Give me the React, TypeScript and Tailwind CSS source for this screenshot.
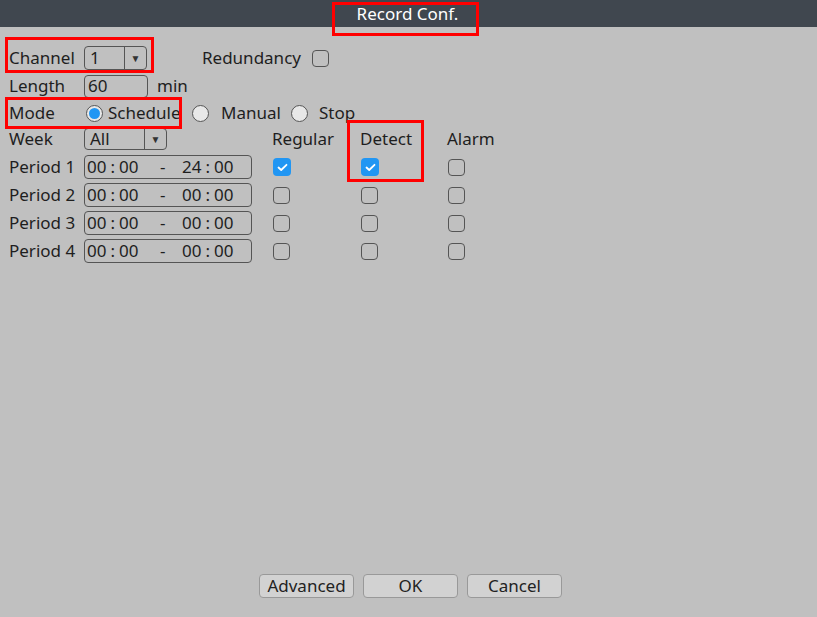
import React from 'react';

const font = { fontFamily: '"Noto Sans", "Open Sans", sans-serif' };

const Check = ({ on }: { on?: boolean }) =>
  on ? (
    <span className="flex h-[18px] w-[18px] items-center justify-center rounded-[4px] bg-[#2196f3]">
      <svg width="11" height="9" viewBox="0 0 11 9" fill="none">
        <path d="M1.5 4.5 L4.2 7 L9.5 1.8" stroke="white" strokeWidth="1.8" strokeLinecap="round" strokeLinejoin="round" />
      </svg>
    </span>
  ) : (
    <span className="block h-[17px] w-[17px] rounded-[4px] border-[1.5px] border-[#555]" />
  );

const Radio = ({ on }: { on?: boolean }) => (
  <span className="flex h-[17px] w-[17px] items-center justify-center rounded-full border-[1.5px] border-[#555] bg-[#e8e8e8]">
    {on && <span className="block h-[11px] w-[11px] rounded-full bg-[#2196f3]" />}
  </span>
);

const Select = ({ value, w, h }: { value: string; w: string; h: string }) => (
  <div className={`flex ${w} ${h} items-stretch rounded-[4px] border border-[#555]`}>
    <span className="flex flex-1 items-center pl-[5px]">{value}</span>
    <span className="flex w-[22px] items-center justify-center border-l border-[#555] text-[10px] text-[#333]">▼</span>
  </div>
);

const TimeBox = ({ end }: { end: string }) => (
  <div className="flex h-[24px] w-[168px] items-center rounded-[4px] border border-[#555] pl-[2px]">
    <span className="w-[73px]">00<span className="mx-[4px]">:</span>00</span>
    <span className="w-[22px]">-</span>
    <span>{end.slice(0, 2)}<span className="mx-[4px]">:</span>{end.slice(3)}</span>
  </div>
);

const periods = [
  { name: 'Period 1', end: '24:00', regular: true, detect: true },
  { name: 'Period 2', end: '00:00' },
  { name: 'Period 3', end: '00:00' },
  { name: 'Period 4', end: '00:00' },
];

export default function App() {
  return (
    <div style={font} className="relative flex h-[617px] w-[817px] flex-col bg-[#c0c0c0] text-[17px] text-[#1e1e1e]">
      <div className="flex h-[27px] items-center justify-center bg-[#40474f] text-white">
        <span className="ml-[-2px]">Record Conf.</span>
      </div>

      <div className="flex flex-col pl-[9px] pt-[17px]">
        <div className="flex h-[28px] items-center">
          <span className="w-[75px]">Channel</span>
          <Select value="1" w="w-[63px]" h="h-[24px]" />
          <span className="ml-[55px] w-[110px]">Redundancy</span>
          <Check />
        </div>
        <div className="flex h-[28px] items-center">
          <span className="w-[75px]">Length</span>
          <div className="flex h-[23px] w-[64px] items-center rounded-[4px] border border-[#555] pl-[3px]">60</div>
          <span className="ml-[9px]">min</span>
        </div>
        <div className="flex h-[26px] items-center">
          <span className="w-[77px]">Mode</span>
          <Radio on />
          <span className="ml-[5px] w-[84px]">Schedule</span>
          <Radio />
          <span className="ml-[12px] w-[70px]">Manual</span>
          <Radio />
          <span className="ml-[11px]">Stop</span>
        </div>
        <div className="flex h-[26px] items-center">
          <span className="w-[75px]">Week</span>
          <Select value="All" w="w-[83px]" h="h-[22px]" />
          <span className="ml-[105px] w-[88px]">Regular</span>
          <span className="w-[87px]">Detect</span>
          <span>Alarm</span>
        </div>
        {periods.map((p, i) => (
          <div key={p.name} className={`flex h-[28px] items-center ${i === 0 ? 'mt-[1px]' : ''}`}>
            <span className="w-[75px]">{p.name}</span>
            <TimeBox end={p.end} />
            <div className="ml-[21px] w-[88px]"><Check on={p.regular} /></div>
            <div className="w-[87px]"><Check on={p.detect} /></div>
            <div><Check /></div>
          </div>
        ))}
      </div>

      <div className="mt-auto flex gap-[9px] pb-[19px] pl-[259px]">
        {['Advanced', 'OK', 'Cancel'].map((b) => (
          <button key={b} className="h-[24px] w-[95px] rounded-[4px] border border-[#999] bg-[#d2d2d2] leading-[22px] text-[#222]">
            {b}
          </button>
        ))}
      </div>

      {/* red annotation boxes */}
      <div className="absolute left-[332px] top-[2px] h-[34px] w-[147px] border-[3px] border-[#ff0000]" />
      <div className="absolute left-[5px] top-[37px] h-[36px] w-[149px] border-[3px] border-[#ff0000]" />
      <div className="absolute left-[5px] top-[97px] h-[32px] w-[177px] border-[3px] border-[#ff0000]" />
      <div className="absolute left-[347px] top-[120px] h-[62px] w-[77px] border-[3px] border-[#ff0000]" />
    </div>
  );
}
